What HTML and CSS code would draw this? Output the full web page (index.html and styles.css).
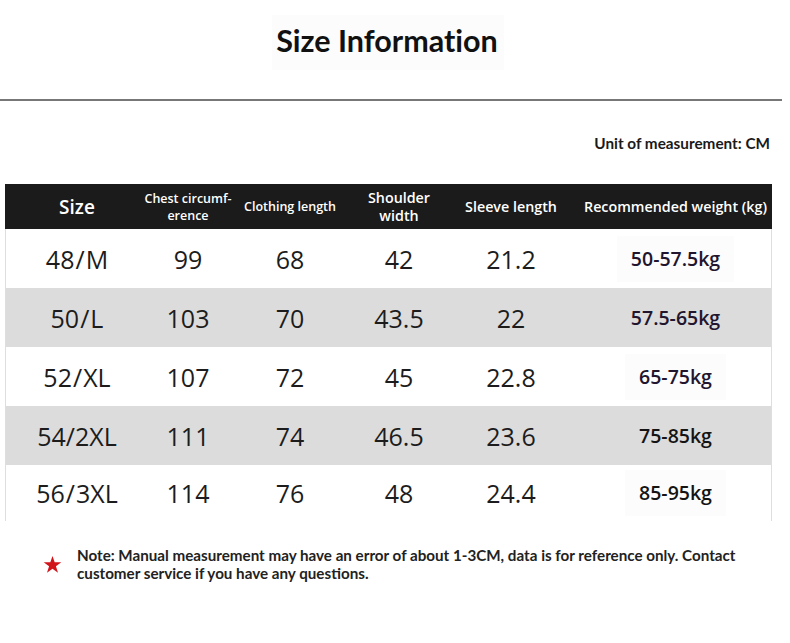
FILE: index.html
```html
<!DOCTYPE html>
<html lang="en">
<head>
<meta charset="utf-8">
<title>Size Information</title>
<link rel="stylesheet" href="styles.css">
</head>
<body>
<div class="page">
  <header class="head">
    <h1 class="title">Size Information</h1>
  </header>
  <div class="rule"></div>
  <p class="unit">Unit of measurement: CM</p>

  <div class="table">
    <div class="row thead">
      <div class="cell c-size"><span class="h-size">Size</span></div>
      <div class="cell"><span class="h-small">Chest circumf-<br>erence</span></div>
      <div class="cell"><span class="h-small">Clothing length</span></div>
      <div class="cell"><span class="h-mid">Shoulder<br>width</span></div>
      <div class="cell"><span class="h-mid">Sleeve length</span></div>
      <div class="cell c-wt"><span class="h-mid">Recommended weight (kg)</span></div>
    </div>

    <div class="row">
      <div class="cell"><span class="v">48<span class="sl">/</span>M</span></div>
      <div class="cell"><span class="v">99</span></div>
      <div class="cell"><span class="v">68</span></div>
      <div class="cell"><span class="v">42</span></div>
      <div class="cell"><span class="v">21.2</span></div>
      <div class="cell c-wt"><span class="w box">50-57.5kg</span></div>
    </div>

    <div class="row grey">
      <div class="cell"><span class="v">50<span class="sl">/</span>L</span></div>
      <div class="cell"><span class="v">103</span></div>
      <div class="cell"><span class="v">70</span></div>
      <div class="cell"><span class="v">43.5</span></div>
      <div class="cell"><span class="v">22</span></div>
      <div class="cell c-wt"><span class="w">57.5-65kg</span></div>
    </div>

    <div class="row">
      <div class="cell"><span class="v">52<span class="sl">/</span>XL</span></div>
      <div class="cell"><span class="v">107</span></div>
      <div class="cell"><span class="v">72</span></div>
      <div class="cell"><span class="v">45</span></div>
      <div class="cell"><span class="v">22.8</span></div>
      <div class="cell c-wt"><span class="w box">65-75kg</span></div>
    </div>

    <div class="row grey dark">
      <div class="cell"><span class="v">54/2XL</span></div>
      <div class="cell"><span class="v">111</span></div>
      <div class="cell"><span class="v">74</span></div>
      <div class="cell"><span class="v">46.5</span></div>
      <div class="cell"><span class="v">23.6</span></div>
      <div class="cell c-wt"><span class="w">75-85kg</span></div>
    </div>

    <div class="row dark last">
      <div class="cell"><span class="v">56<span class="sl">/</span>3XL</span></div>
      <div class="cell"><span class="v">114</span></div>
      <div class="cell"><span class="v">76</span></div>
      <div class="cell"><span class="v">48</span></div>
      <div class="cell"><span class="v">24.4</span></div>
      <div class="cell c-wt"><span class="w box">85-95kg</span></div>
    </div>
  </div>

  <div class="note">
    <svg class="star" viewBox="0 0 20 20" width="19" height="19" aria-hidden="true">
      <polygon points="10,1 12.3,7.6 19.3,7.6 13.6,11.8 15.8,18.6 10,14.4 4.2,18.6 6.4,11.8 0.7,7.6 7.7,7.6" fill="#d0151b"/>
    </svg>
    <p class="note-text">Note: Manual measurement may have an error of about 1-3CM, data is for reference only. Contact customer service if you have any questions.</p>
  </div>
</div>
</body>
</html>
```

FILE: styles.css
```css
html, body {
  margin: 0;
  padding: 0;
  background: #ffffff;
}

.page {
  width: 790px;
  height: 643px;
  overflow: hidden;
  font-family: "Lato", "Liberation Sans", sans-serif;
  color: #1b1b1b;
}

.head {
  height: 99px;
  display: flex;
  justify-content: center;
  align-items: flex-start;
}

.title {
  margin: 15px 0 0 -14px;
  padding: 7px 6px 12px 4px;
  font-family: "Lato", sans-serif;
  font-weight: 700;
  font-size: 30.5px;
  line-height: 36px;
  font-variant-ligatures: none;
  color: #111111;
  background: #fcfcfc;
}

.rule {
  width: 782px;
  height: 2px;
  background: #777777;
}

.unit {
  margin: 33px 20px 0 0;
  text-align: right;
  font-family: "Lato", sans-serif;
  font-weight: 700;
  font-size: 15.3px;
  line-height: 18px;
  color: #1a1a1a;
}

.table {
  margin: 32px 0 0 5px;
  width: 767px;
}

.row {
  display: grid;
  grid-template-columns: 142px 80px 124px 94px 130px 197px;
  height: 59px;
  background: #ffffff;
  border-left: 1px solid #dedede;
  border-right: 1px solid #dedede;
  box-sizing: border-box;
}

.row.grey {
  background: #dcdcdc;
}

.row.last {
  height: 56px;
}

.row.thead {
  height: 45px;
  background: #1b1b1b;
  border-color: #1b1b1b;
  color: #ffffff;
  font-family: "Open Sans", sans-serif;
  font-weight: 600;
}

.cell {
  display: flex;
  justify-content: center;
  align-items: center;
  min-width: 0;
  white-space: nowrap;
  text-align: center;
}

.c-wt {
  padding-left: 2px;
}

.h-size {
  font-size: 19px;
  line-height: 24px;
}

.h-small {
  font-size: 12.5px;
  line-height: 17px;
}

.h-mid {
  font-size: 14.3px;
  line-height: 18px;
}

.v {
  font-family: "Open Sans", sans-serif;
  font-weight: 400;
  font-size: 25px;
  line-height: 30px;
  color: #1c1c1c;
}

.sl {
  margin: 0 1px;
}

.w {
  font-family: "Open Sans", sans-serif;
  font-weight: 600;
  font-size: 19.5px;
  line-height: 24px;
  color: #22152e;
}

.w.box {
  padding: 11px 14px;
  background: #fdfcfd;
}

.dark .w {
  color: #141414;
}

.note {
  display: flex;
  align-items: center;
  gap: 15px;
  margin: 25px 0 0 43px;
}

.star {
  flex: none;
  display: block;
}

.note-text {
  margin: 0;
  width: 680px;
  font-family: "Lato", sans-serif;
  font-weight: 700;
  font-size: 15.2px;
  line-height: 18px;
  color: #222222;
}
```
